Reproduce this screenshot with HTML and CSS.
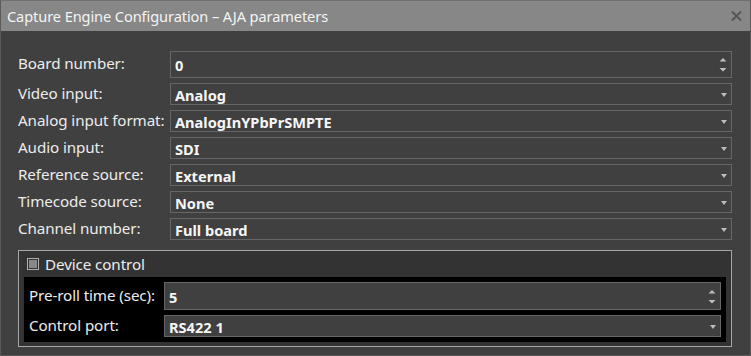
FILE: index.html
```html
<!DOCTYPE html>
<html>
<head>
<meta charset="utf-8">
<link rel="stylesheet" href="styles.css">
</head>
<body>
<div class="window">
  <div class="titlebar">
    <span class="title">Capture Engine Configuration – AJA parameters</span>
    <svg class="close" width="11" height="10" viewBox="0 0 11 10"><path d="M1 0.5 L10 9.5 M10 0.5 L1 9.5" stroke="#555" stroke-width="2"/></svg>
  </div>
  <div class="content">
    <div class="form">
      <div class="label">Board number:</div>
      <div class="field spin"><span class="value">0</span>
        <span class="arrows"><svg width="8" height="14" viewBox="0 0 8 14"><path d="M4 0 L7.5 3.5 L0.5 3.5 Z M0.5 10 L7.5 10 L4 13.5 Z" fill="#bdbdbd"/></svg></span>
      </div>
      <div class="label">Video input:</div>
      <div class="field drop"><span class="value">Analog</span><span class="caret"></span></div>
      <div class="label">Analog input format:</div>
      <div class="field drop"><span class="value">AnalogInYPbPrSMPTE</span><span class="caret"></span></div>
      <div class="label">Audio input:</div>
      <div class="field drop"><span class="value">SDI</span><span class="caret"></span></div>
      <div class="label">Reference source:</div>
      <div class="field drop"><span class="value">External</span><span class="caret"></span></div>
      <div class="label">Timecode source:</div>
      <div class="field drop"><span class="value">None</span><span class="caret"></span></div>
      <div class="label">Channel number:</div>
      <div class="field drop"><span class="value">Full board</span><span class="caret"></span></div>
    </div>
    <div class="group">
      <div class="group-head"><span class="checkbox"></span><span class="group-title">Device control</span></div>
      <div class="panel">
        <div class="label">Pre-roll time (sec):</div>
        <div class="field spin tall"><span class="value">5</span>
          <span class="arrows"><svg width="8" height="14" viewBox="0 0 8 14"><path d="M4 0 L7.5 3.5 L0.5 3.5 Z M0.5 10 L7.5 10 L4 13.5 Z" fill="#bdbdbd"/></svg></span>
        </div>
        <div class="label">Control port:</div>
        <div class="field drop"><span class="value">RS422 1</span><span class="caret"></span></div>
      </div>
    </div>
  </div>
</div>
</body>
</html>
```
FILE: styles.css
```css
* { box-sizing: border-box; }
html, body { margin: 0; padding: 0; background: #404040; }
body { width: 751px; height: 356px; overflow: hidden; font-family: "Noto Sans", "Open Sans", sans-serif; }
.window {
  width: 751px; height: 356px;
  background: #404040;
  border: 1px solid #5a5a5a;
  border-top-color: #707070;
  display: flex; flex-direction: column;
}
.titlebar {
  height: 30px;
  background: #878787;
  display: flex; align-items: center; justify-content: space-between;
  padding: 0 7px 1px 6px;
}
.title { color: #f4f4f4; font-size: 14.6px; letter-spacing: -0.1px; }
.close { margin-top: 1px; margin-right: 1px; }
.content { padding: 20px 18px 0 17px; }
.form {
  display: grid;
  grid-template-columns: 152px 1fr;
  grid-auto-rows: 22px;
  row-gap: 5px;
  grid-template-rows: 27px;
}
.label {
  color: #ececec; font-size: 15.2px; letter-spacing: -0.1px;
  display: flex; align-items: center;
  padding-bottom: 3px; white-space: nowrap;
}
.field {
  border: 1px solid #666666;
  background: #404040;
  display: flex; align-items: center; justify-content: space-between;
  padding: 0 4px 0 4px;
}
.value { color: #f6f6f6; font-weight: bold; font-size: 14.6px; padding-top: 1px; }
.arrows { display: flex; align-items: center; padding-top: 1px; }
.arrows svg { display: block; }
.caret {
  width: 0; height: 0;
  border-left: 3px solid transparent; border-right: 3px solid transparent;
  border-top: 4px solid #bdbdbd;
  position: relative; top: 1px;
}
.group {
  margin-top: 10px;
  border: 1px solid #a6a6a6;
  background: #333333;
  padding: 0 5px 4px 5px;
}
.group-head { height: 26px; display: flex; align-items: center; padding-left: 3px; padding-bottom: 1px; }
.checkbox {
  width: 12px; height: 12px; border: 1px solid #b0b0b0;
  padding: 1px; margin-right: 6px;
  background-color: #3a3a3a;
  background-image: linear-gradient(#888, #888);
  background-origin: content-box; background-clip: content-box;
}
.group-title { color: #ececec; font-size: 15.2px; letter-spacing: -0.1px; }
.panel {
  background: #000;
  padding: 5px;
  display: grid;
  grid-template-columns: 135px 1fr;
  grid-template-rows: 28px 22px;
  row-gap: 5px;
}
.panel .label { padding-bottom: 2px; }
```
